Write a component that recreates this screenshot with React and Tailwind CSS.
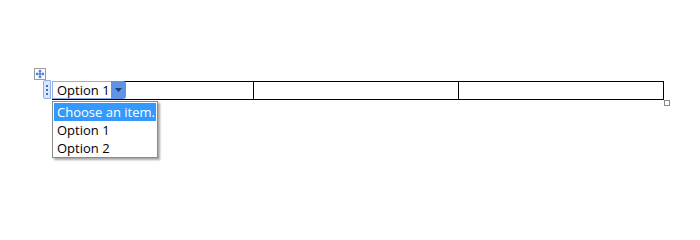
import React from "react";

const font = { fontFamily: "'Open Sans', 'Noto Sans', sans-serif" };

function MoveHandle() {
  return (
    <div className="ml-[34px] w-[12px] h-[12px] border border-[#9a9a9a] bg-white flex items-center justify-center">
      <svg width="10" height="10" viewBox="0 0 10 10">
        <path d="M5 0.5 L7 2.5 H5.6 V4.4 H7.5 V3 L9.5 5 L7.5 7 V5.6 H5.6 V7.5 H7 L5 9.5 L3 7.5 H4.4 V5.6 H2.5 V7 L0.5 5 L2.5 3 V4.4 H4.4 V2.5 H3 Z" fill="#2f6fd6" />
      </svg>
    </div>
  );
}

function ContentControl() {
  return (
    <div className="relative flex h-[18px] -mt-[1px] -ml-[1px]">
      <div className="absolute -left-[9px] top-[-1px] w-[8px] h-[19px] bg-[#dbe6f8] border border-[#8eaee4] rounded-l-[2px] flex flex-col items-center justify-center gap-[2px]">
        <span className="w-[2px] h-[2px] bg-[#3c6fc8]" />
        <span className="w-[2px] h-[2px] bg-[#3c6fc8]" />
        <span className="w-[2px] h-[2px] bg-[#3c6fc8]" />
      </div>
      <div className="h-[18px] w-[59px] bg-white border border-[#8eaee4] border-r-0 flex items-center pl-[4px] text-[13px] text-black leading-none">
        Option 1
      </div>
      <div className="h-[18px] w-[15px] bg-[#5f93e6] rounded-r-[3px] flex items-center justify-center">
        <svg width="7" height="4" viewBox="0 0 7 4">
          <path d="M0 0 H7 L3.5 4 Z" fill="#1d3f7a" />
        </svg>
      </div>
    </div>
  );
}

function Dropdown() {
  return (
    <div className="absolute left-[52px] top-[101px] w-[106px] h-[57px] bg-white border border-[#8a8a8a] p-[1px] shadow-[2px_2px_2px_rgba(0,0,0,0.35)] text-[13px] leading-none">
      <div className="h-[18px] bg-[#3399ff] text-white flex items-center pl-[3px]">Choose an item.</div>
      <div className="h-[18px] text-black flex items-center pl-[3px]">Option 1</div>
      <div className="h-[18px] text-black flex items-center pl-[3px]">Option 2</div>
    </div>
  );
}

export default function App() {
  return (
    <div className="relative w-[700px] h-[218px] bg-white pt-[68px]" style={font}>
      <MoveHandle />
      <div className="relative ml-[52px] mt-[1px] w-[612px]">
        <div className="grid grid-cols-[201px_205px_1fr] h-[19px] border border-black">
          <div className="border-r border-black">
            <ContentControl />
          </div>
          <div className="border-r border-black" />
          <div />
        </div>
        <div className="absolute right-[-6px] top-[19px] w-[6px] h-[6px] border border-[#8a8a8a] bg-white" />
      </div>
      <Dropdown />
    </div>
  );
}
